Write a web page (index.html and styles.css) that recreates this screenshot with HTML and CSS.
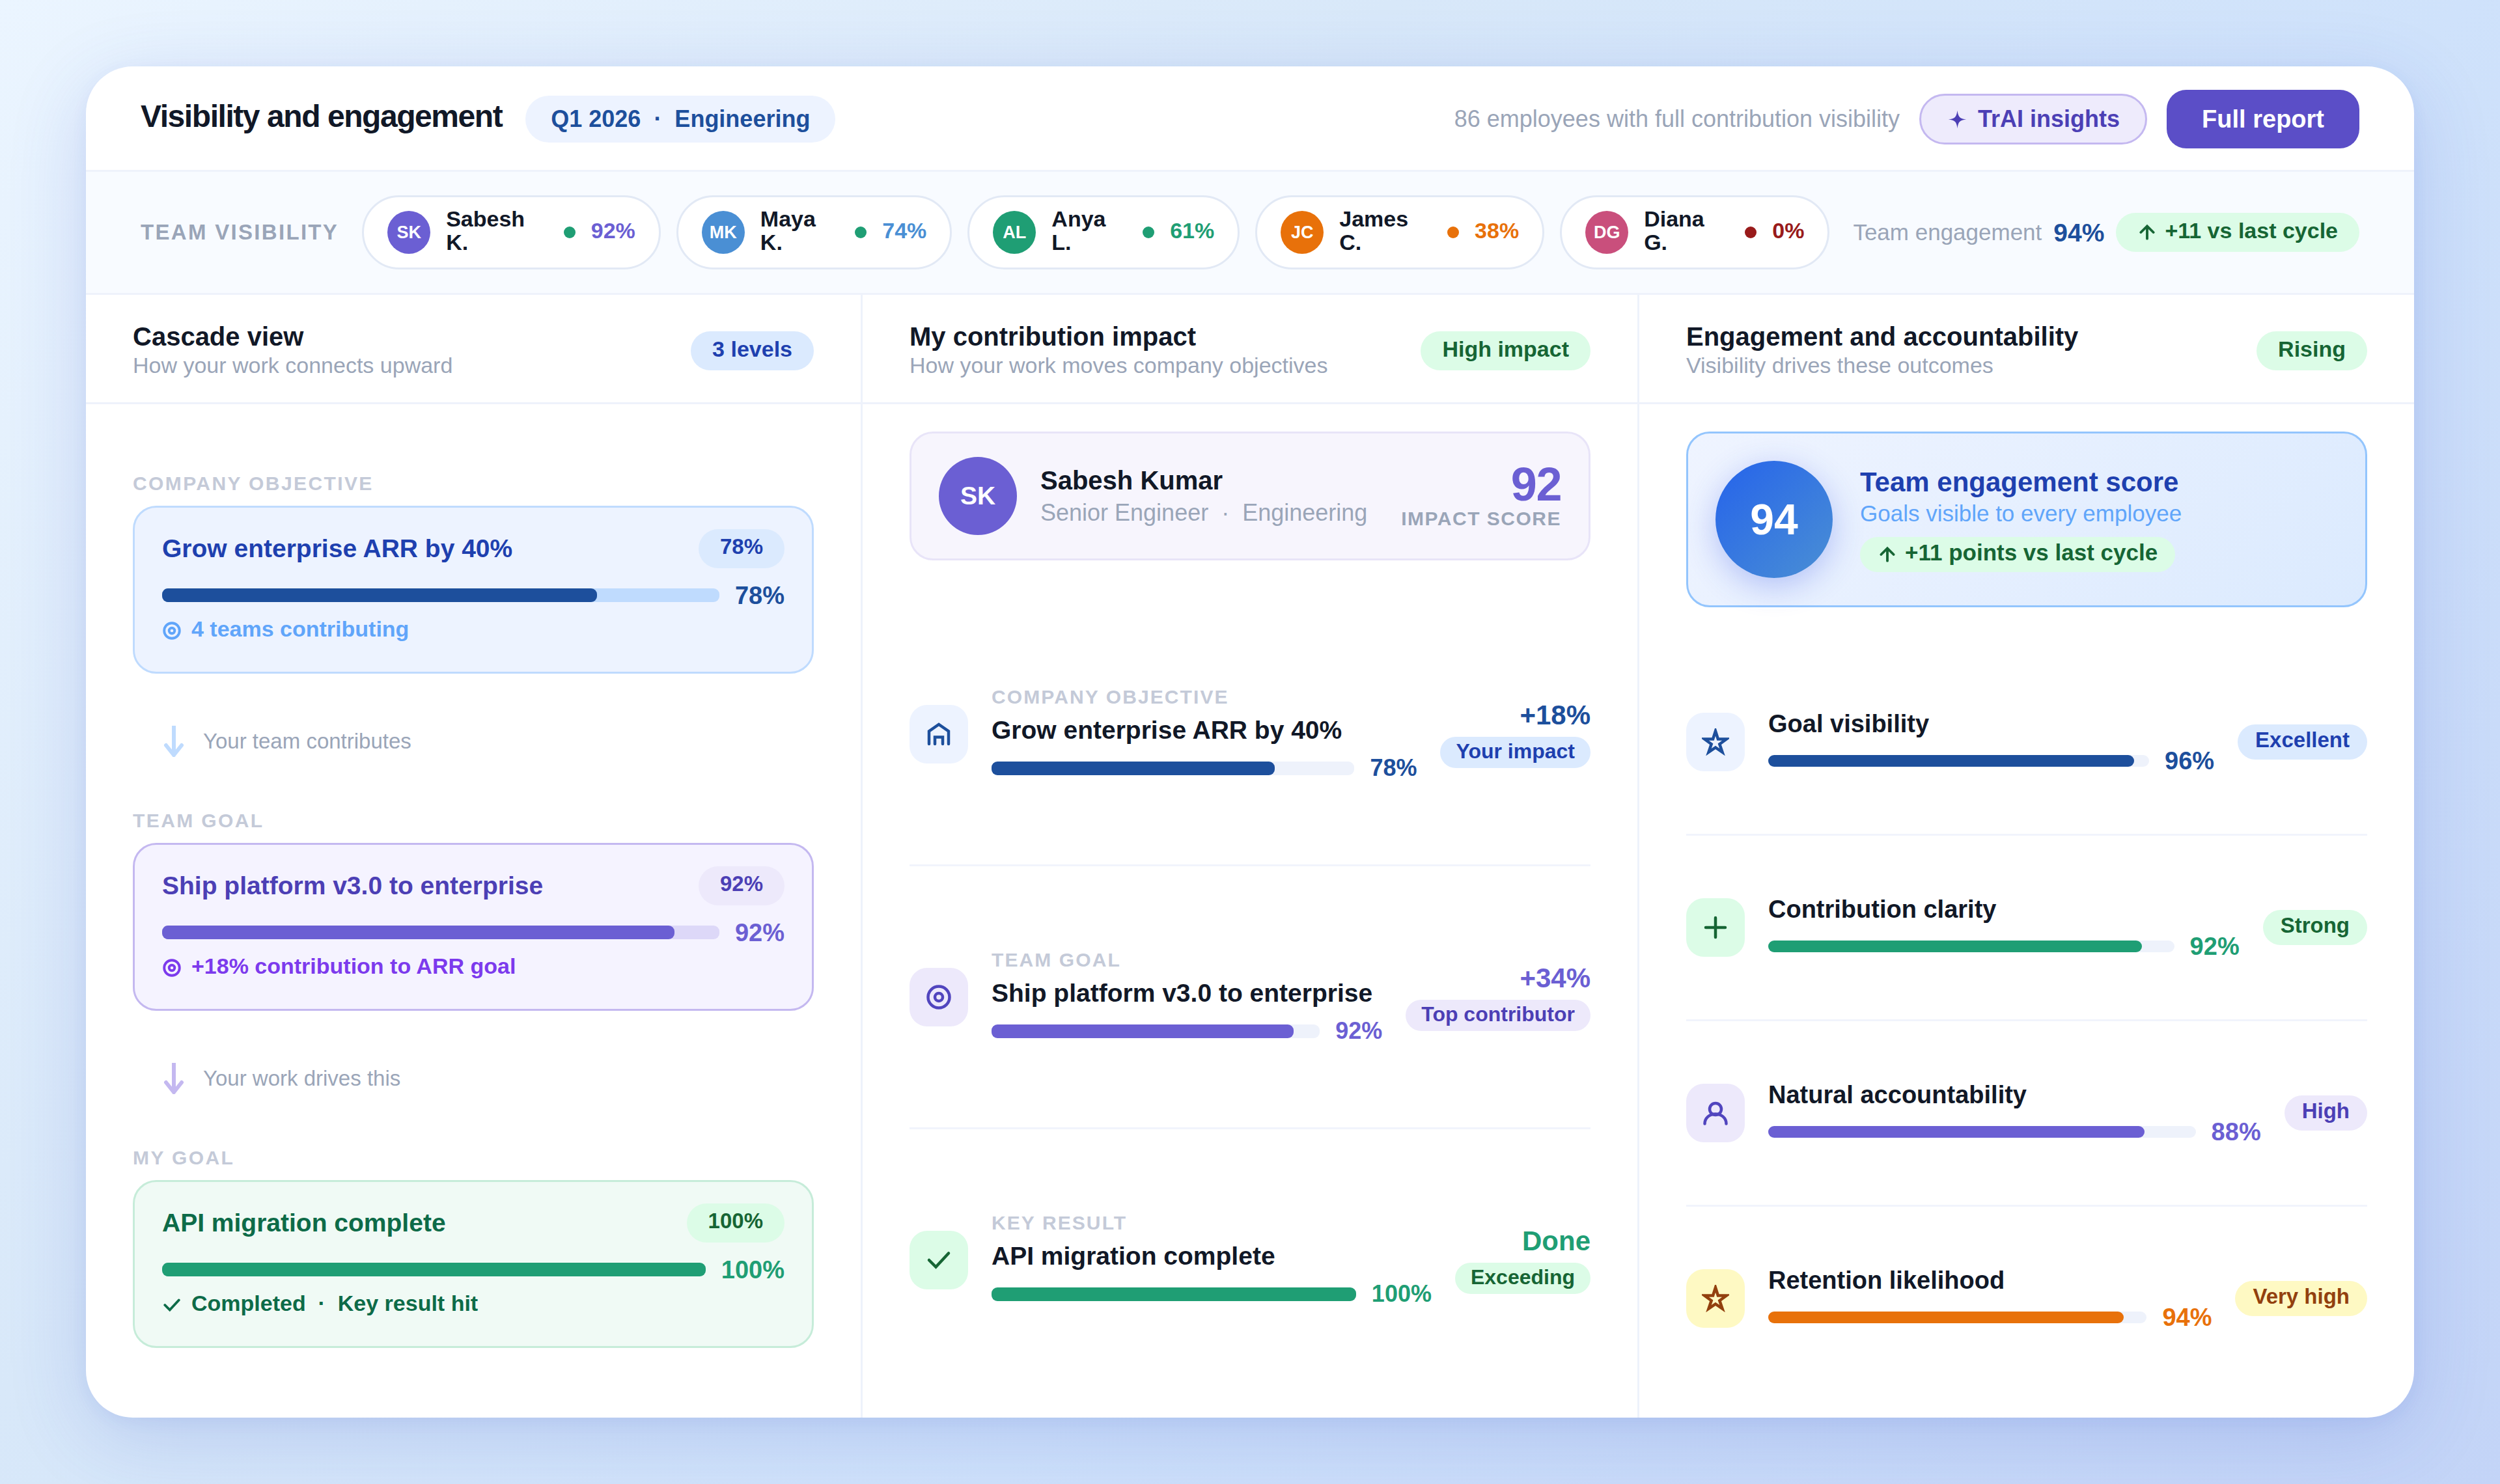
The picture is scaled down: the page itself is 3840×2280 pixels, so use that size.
FILE: index.html
```html
<!DOCTYPE html>
<html lang="en">
<head>
	<meta charset="utf-8">
	<title>Visibility and engagement</title>
	<link rel="stylesheet" href="styles.css">
</head>
<body>
	<!-- shared icons -->
	<svg class="sprite" aria-hidden="true">
		<symbol id="target" viewBox="0 0 14 14"><circle cx="7" cy="7" r="5.5"/><circle cx="7" cy="7" r="2"/></symbol>
		<symbol id="check" viewBox="0 0 14 14"><path d="M2 7l3.5 3.5 6.5-7"/></symbol>
		<symbol id="up" viewBox="0 0 14 14"><path d="M7 11.5V3M2.5 7L7 2.5 11.5 7"/></symbol>
		<symbol id="star" viewBox="0 0 14 14"><path d="M7 1.4l1.3 4.1h4.3L9.1 8.1l1.4 4.1L7 9.8l-3.5 2.4 1.4-4.1L1.4 5.5h4.3z"/></symbol>
		<symbol id="house" viewBox="0 0 14 14"><path d="M2 12V5.5L7 2l5 3.5V12M5 12V8.5h4V12"/></symbol>
		<symbol id="plus" viewBox="0 0 14 14"><path d="M7 2v10M2 7h10"/></symbol>
		<symbol id="person" viewBox="0 0 14 14"><circle cx="7" cy="5" r="3"/><path d="M1.5 12.5c0-3 2.5-5 5.5-5s5.5 2 5.5 5"/></symbol>
		<symbol id="down" viewBox="0 0 12 16"><path d="M6 0v15M2 10l4 5 4-5"/></symbol>
	</svg>

	<main class="board">
		<header class="topbar">
			<div class="topbar-title">
				<h1>Visibility and engagement</h1>
				<span class="period">Q1 2026 &nbsp;·&nbsp; Engineering</span>
			</div>
			<div class="topbar-actions">
				<span class="note">86 employees with full contribution visibility</span>
				<button type="button" class="btn-insights">
					<svg viewBox="0 0 14 14"><path d="M7 1.2Q7.4 4.4 8.5 5.5 9.6 6.6 12.8 7 9.6 7.4 8.5 8.5 7.4 9.6 7 12.8 6.6 9.6 5.5 8.5 4.4 7.4 1.2 7 4.4 6.6 5.5 5.5 6.6 4.4 7 1.2z"/></svg>
					TrAI insights
				</button>
				<button type="button" class="btn-report">Full report</button>
			</div>
		</header>

		<section class="teambar">
			<span class="teambar-label">TEAM VISIBILITY</span>
			<div class="chips">
				<div class="chip"><span class="avatar violet">SK</span><span class="chip-text">Sabesh K.</span><span class="dot on"></span><span class="chip-text t-violet">92%</span></div>
				<div class="chip"><span class="avatar sky">MK</span><span class="chip-text">Maya K.</span><span class="dot on"></span><span class="chip-text t-sky">74%</span></div>
				<div class="chip"><span class="avatar green">AL</span><span class="chip-text">Anya L.</span><span class="dot on"></span><span class="chip-text t-green">61%</span></div>
				<div class="chip"><span class="avatar orange">JC</span><span class="chip-text">James C.</span><span class="dot warn"></span><span class="chip-text t-orange">38%</span></div>
				<div class="chip"><span class="avatar pink">DG</span><span class="chip-text">Diana G.</span><span class="dot off"></span><span class="chip-text t-red">0%</span></div>
			</div>
			<div class="team-score">
				<span>Team engagement</span>
				<strong>94%</strong>
				<span class="pill pill-lg pill-green"><svg class="icon"><use href="#up"/></svg><span>+11 vs last cycle</span></span>
			</div>
		</section>

		<div class="columns">
			<section class="column">
				<div class="column-head">
					<div>
						<h2>Cascade view</h2>
						<p>How your work connects upward</p>
					</div>
					<span class="pill pill-lg pill-blue">3 levels</span>
				</div>
				<div class="column-body cascade">
					<div class="level">
						<div class="kicker">COMPANY OBJECTIVE</div>
						<div class="goal goal-blue">
							<div class="goal-top"><h3>Grow enterprise ARR by 40%</h3><span class="pill pill-pct pill-blue">78%</span></div>
							<div class="progress"><div class="track"><div class="fill" style="width: 78%"></div></div><b>78%</b></div>
							<div class="goal-foot"><svg class="icon"><use href="#target"/></svg>4 teams contributing</div>
						</div>
					</div>
					<div class="connector link-blue"><svg><use href="#down"/></svg>Your team contributes</div>
					<div class="level">
						<div class="kicker">TEAM GOAL</div>
						<div class="goal goal-violet">
							<div class="goal-top"><h3>Ship platform v3.0 to enterprise</h3><span class="pill pill-pct pill-violet">92%</span></div>
							<div class="progress"><div class="track"><div class="fill" style="width: 92%"></div></div><b>92%</b></div>
							<div class="goal-foot"><svg class="icon"><use href="#target"/></svg>+18% contribution to ARR goal</div>
						</div>
					</div>
					<div class="connector link-violet"><svg><use href="#down"/></svg>Your work drives this</div>
					<div class="level">
						<div class="kicker">MY GOAL</div>
						<div class="goal goal-green">
							<div class="goal-top"><h3>API migration complete</h3><span class="pill pill-pct pill-green">100%</span></div>
							<div class="progress"><div class="track"><div class="fill" style="width: 100%"></div></div><b>100%</b></div>
							<div class="goal-foot"><svg class="icon"><use href="#check"/></svg>Completed &nbsp;·&nbsp; Key result hit</div>
						</div>
					</div>
				</div>
			</section>

			<section class="column">
				<div class="column-head">
					<div>
						<h2>My contribution impact</h2>
						<p>How your work moves company objectives</p>
					</div>
					<span class="pill pill-lg pill-green">High impact</span>
				</div>
				<div class="column-body">
					<div class="profile">
						<span class="avatar avatar-lg violet">SK</span>
						<div class="profile-info">
							<h3>Sabesh Kumar</h3>
							<p>Senior Engineer &nbsp;·&nbsp; Engineering</p>
						</div>
						<div class="profile-score">
							<strong>92</strong>
							<span>IMPACT SCORE</span>
						</div>
					</div>
					<div class="row impact c-blue">
						<div class="tile tile-blue"><svg><use href="#house"/></svg></div>
						<div class="row-main">
							<div class="kicker">COMPANY OBJECTIVE</div>
							<h3>Grow enterprise ARR by 40%</h3>
							<div class="progress"><div class="track"><div class="fill" style="width: 78%"></div></div><b>78%</b></div>
						</div>
						<div class="row-side"><strong>+18%</strong><span class="pill pill-sm pill-blue">Your impact</span></div>
					</div>
					<div class="row impact c-violet">
						<div class="tile tile-violet"><svg><use href="#target"/></svg></div>
						<div class="row-main">
							<div class="kicker">TEAM GOAL</div>
							<h3>Ship platform v3.0 to enterprise</h3>
							<div class="progress"><div class="track"><div class="fill" style="width: 92%"></div></div><b>92%</b></div>
						</div>
						<div class="row-side"><strong>+34%</strong><span class="pill pill-sm pill-violet">Top contributor</span></div>
					</div>
					<div class="row impact c-green">
						<div class="tile tile-green"><svg><use href="#check"/></svg></div>
						<div class="row-main">
							<div class="kicker">KEY RESULT</div>
							<h3>API migration complete</h3>
							<div class="progress"><div class="track"><div class="fill" style="width: 100%"></div></div><b>100%</b></div>
						</div>
						<div class="row-side"><strong>Done</strong><span class="pill pill-sm pill-green">Exceeding</span></div>
					</div>
				</div>
			</section>

			<section class="column">
				<div class="column-head">
					<div>
						<h2>Engagement and accountability</h2>
						<p>Visibility drives these outcomes</p>
					</div>
					<span class="pill pill-lg pill-green">Rising</span>
				</div>
				<div class="column-body">
					<div class="hero">
						<div class="ring">94</div>
						<div class="hero-info">
							<h3>Team engagement score</h3>
							<p>Goals visible to every employee</p>
							<span class="pill pill-green"><svg class="icon"><use href="#up"/></svg><span>+11 points vs last cycle</span></span>
						</div>
					</div>
					<div class="row outcome c-blue">
						<div class="tile tile-blue"><svg><use href="#star"/></svg></div>
						<div class="row-main">
							<h3>Goal visibility</h3>
							<div class="progress"><div class="track"><div class="fill" style="width: 96%"></div></div><b>96%</b></div>
						</div>
						<span class="pill pill-blue">Excellent</span>
					</div>
					<div class="row outcome c-green">
						<div class="tile tile-green"><svg><use href="#plus"/></svg></div>
						<div class="row-main">
							<h3>Contribution clarity</h3>
							<div class="progress"><div class="track"><div class="fill" style="width: 92%"></div></div><b>92%</b></div>
						</div>
						<span class="pill pill-green">Strong</span>
					</div>
					<div class="row outcome c-violet">
						<div class="tile tile-violet"><svg><use href="#person"/></svg></div>
						<div class="row-main">
							<h3>Natural accountability</h3>
							<div class="progress"><div class="track"><div class="fill" style="width: 88%"></div></div><b>88%</b></div>
						</div>
						<span class="pill pill-violet">High</span>
					</div>
					<div class="row outcome c-orange">
						<div class="tile tile-yellow"><svg><use href="#star"/></svg></div>
						<div class="row-main">
							<h3>Retention likelihood</h3>
							<div class="progress"><div class="track"><div class="fill" style="width: 94%"></div></div><b>94%</b></div>
						</div>
						<span class="pill pill-yellow">Very high</span>
					</div>
				</div>
			</section>
		</div>
	</main>
</body>
</html>
```

FILE: styles.css
```css
* {
	box-sizing: border-box;
	margin: 0;
	padding: 0;
}
body {
	min-height: 100vh;
	display: flex;
	padding: 102px 132px;
	font-family: "Liberation Sans", Arial, sans-serif;
	font-size: 34px;
	line-height: 36px;
	color: #111827;
	background: linear-gradient(135deg, #ebf5ff 0%, #d8e8f9 35%, #cfe2fb 62%, #c3d4f7 100%);
}
button {
	font-family: inherit;
	font-weight: bold;
	cursor: pointer;
}
svg {
	flex: none;
	fill: none;
	stroke: currentColor;
	stroke-width: 1.5;
	stroke-linecap: round;
}
.sprite {
	display: none;
}
.icon {
	width: 30px;
	height: 30px;
	stroke-width: 1.8;
}

/* card */
.board {
	flex: 1;
	min-width: 0;
	display: flex;
	flex-direction: column;
	background: #fff;
	border-radius: 72px;
	overflow: hidden;
	box-shadow: 0 30px 120px rgba(50, 80, 200, 0.18), 0 6px 24px rgba(50, 80, 200, 0.06);
}

/* top bar */
.topbar {
	display: flex;
	align-items: center;
	justify-content: space-between;
	padding: 36px 84px 33px;
	border-bottom: 3px solid #eef2fb;
}
.topbar-title {
	display: flex;
	align-items: baseline;
	gap: 36px;
	white-space: nowrap;
}
h1 {
	font-size: 48px;
	line-height: 51px;
	letter-spacing: -0.03em;
}
.period {
	padding: 15px 39px;
	border-radius: 36px;
	font-size: 36px;
	line-height: 42px;
	font-weight: bold;
	color: #1d4f9c;
	background: #edf3ff;
}
.topbar-actions {
	display: flex;
	align-items: center;
	gap: 30px;
	white-space: nowrap;
}
.note {
	font-size: 36px;
	line-height: 42px;
	color: #9aa5b8;
}
.btn-insights {
	display: flex;
	align-items: center;
	gap: 15px;
	padding: 15px 39px;
	border: 3px solid #c4b8f0;
	border-radius: 39px;
	font-size: 36px;
	line-height: 42px;
	color: #4c3fb5;
	background: #eeebfc;
}
.btn-insights svg {
	width: 33px;
	height: 33px;
	fill: currentColor;
	stroke: none;
}
.btn-report {
	padding: 24px 54px;
	border: 0;
	border-radius: 30px;
	font-size: 38px;
	line-height: 42px;
	color: #fff;
	background: #5b4ec7;
}

/* team bar */
.teambar {
	display: flex;
	align-items: center;
	gap: 36px;
	padding: 36px 84px;
	background: #f8fbff;
	border-bottom: 3px solid #eef2fb;
}
.teambar-label {
	flex: none;
	font-size: 33px;
	font-weight: bold;
	letter-spacing: 0.07em;
	color: #9aa5b8;
}
.chips {
	flex: 1;
	min-width: 0;
	display: flex;
	gap: 24px;
}
.chip {
	display: flex;
	align-items: center;
	gap: 24px;
	padding: 15px 36px;
	border: 3px solid #e2e9f5;
	border-radius: 57px;
	font-weight: bold;
	background: #fff;
}
.chip-text {
	padding-bottom: 6px;
}
.avatar {
	flex: none;
	display: flex;
	align-items: center;
	justify-content: center;
	width: 66px;
	height: 66px;
	border-radius: 50%;
	font-size: 27px;
	font-weight: bold;
	color: #fff;
}
.avatar-lg {
	width: 120px;
	height: 120px;
	font-size: 39px;
}
.dot {
	flex: none;
	width: 18px;
	height: 18px;
	border-radius: 50%;
}
.on { background: #1f9e74; }
.warn { background: #e8710a; }
.off { background: #991b1b; }
.violet { background: #6b5fd3; }
.sky { background: #4a8fd4; }
.green { background: #1f9e74; }
.orange { background: #e8710a; }
.pink { background: #c94f7c; }
.t-violet { color: #6b5fd3; }
.t-sky { color: #4a8fd4; }
.t-green { color: #1f9e74; }
.t-orange { color: #e8710a; }
.t-red { color: #991b1b; }
.team-score {
	flex: none;
	display: flex;
	align-items: center;
	gap: 18px;
	font-size: 35px;
	color: #9aa5b8;
	white-space: nowrap;
}
.team-score strong {
	font-size: 39px;
	line-height: 45px;
	color: #1d4f9c;
}

/* pills */
.pill {
	flex: none;
	display: inline-flex;
	gap: 12px;
	padding: 6px 27px 12px;
	border-radius: 30px;
	font-size: 33px;
	font-weight: bold;
	white-space: nowrap;
}
.pill .icon {
	margin-top: 6px;
}
.pill-lg {
	padding: 9px 33px 15px;
	font-size: 34px;
}
.pill-pct {
	padding: 9px 33px 15px;
}
.pill-sm {
	padding: 4px 24px 8px;
	font-size: 32px;
}
.pill-blue { color: #1e40af; background: #dbeafe; }
.pill-violet { color: #4c3fb5; background: #ede9fb; }
.pill-green { color: #166534; background: #dcfce7; }
.pill-yellow { color: #92400e; background: #fef9c3; }

/* columns */
.columns {
	flex: 1;
	display: flex;
}
.column {
	flex: 1;
	min-width: 0;
	display: flex;
	flex-direction: column;
}
.column + .column {
	border-left: 3px solid #eef2fb;
}
.column-head {
	display: flex;
	align-items: center;
	justify-content: space-between;
	padding: 42px 72px 36px;
	border-bottom: 3px solid #eef2fb;
}
h2 {
	font-size: 40px;
	line-height: 45px;
}
.column-head p {
	line-height: 42px;
	color: #9aa5b8;
}
.column-body {
	flex: 1;
	display: flex;
	flex-direction: column;
	padding: 42px 72px;
}
.kicker {
	font-size: 30px;
	line-height: 33px;
	font-weight: bold;
	letter-spacing: 0.08em;
	color: #c4cad8;
}

/* progress */
.progress {
	display: flex;
	align-items: center;
	gap: 24px;
	font-size: 38px;
	line-height: 42px;
}
.track {
	flex: 1;
	height: 21px;
	border-radius: 9px;
	background: #eef2fb;
}
.fill {
	height: 100%;
	border-radius: 9px;
}
.outcome .track {
	height: 18px;
}
.impact .progress {
	font-size: 36px;
}

/* cascade */
.cascade {
	justify-content: space-evenly;
	padding-top: 39px;
}
.level .kicker {
	margin-bottom: 18px;
}
.goal {
	padding: 33px 42px 48px;
	border: 3px solid;
	border-radius: 36px;
}
.goal-top {
	display: flex;
	align-items: center;
	justify-content: space-between;
	margin-bottom: 21px;
}
.goal h3 {
	font-size: 39px;
	line-height: 45px;
}
.goal-foot {
	display: flex;
	gap: 15px;
	margin-top: 12px;
	font-weight: bold;
}
.goal-foot .icon {
	margin-top: 6px;
}
.goal-blue { background: #edf3ff; border-color: #bfdbfe; }
.goal-blue h3 { color: #1e40af; }
.goal-blue .track { background: #bfdbfe; }
.goal-blue .fill { background: #1d4f9c; }
.goal-blue b { color: #1d4f9c; }
.goal-blue .goal-foot { color: #60a5fa; }
.goal-violet { background: #f5f3ff; border-color: #c4b8f0; }
.goal-violet h3 { color: #4c3fb5; }
.goal-violet .track { background: #ddd8f8; }
.goal-violet .fill { background: #6b5fd3; }
.goal-violet b { color: #6b5fd3; }
.goal-violet .goal-foot { color: #7c3aed; }
.goal-green { background: #f0faf5; border-color: #c6ecd9; }
.goal-green h3 { color: #0d6b48; }
.goal-green .fill { background: #1f9e74; }
.goal-green b { color: #1f9e74; }
.goal-green .goal-foot { color: #0d6b48; }
.connector {
	display: flex;
	align-items: center;
	gap: 27px;
	padding: 15px 45px;
	font-size: 33px;
	color: #9aa5b8;
}
.connector svg {
	width: 36px;
	height: 48px;
	stroke-width: 2;
}
.link-blue svg { color: #bfdbfe; }
.link-violet svg { color: #c4b8f0; }

/* profile */
.profile {
	display: flex;
	align-items: center;
	gap: 36px;
	margin-bottom: 66px;
	padding: 36px 42px;
	border: 3px solid #e8e4f8;
	border-radius: 36px;
	background: #f7f5fd;
}
.profile-info {
	flex: 1;
}
.profile-info h3 {
	margin-bottom: 6px;
	font-size: 40px;
	line-height: 45px;
}
.profile-info p {
	font-size: 36px;
	line-height: 42px;
	color: #9aa5b8;
	white-space: nowrap;
}
.profile-score {
	padding-bottom: 3px;
	text-align: right;
	white-space: nowrap;
}
.profile-score strong {
	display: block;
	font-size: 72px;
	line-height: 72px;
	letter-spacing: -0.02em;
	color: #6b5fd3;
}
.profile-score span {
	display: block;
	font-size: 30px;
	line-height: 33px;
	font-weight: bold;
	letter-spacing: 0.05em;
	color: #9aa5b8;
}

/* engagement score */
.hero {
	display: flex;
	align-items: center;
	gap: 42px;
	margin-bottom: 66px;
	padding: 42px;
	border: 3px solid #93c5fd;
	border-radius: 36px;
	background: linear-gradient(135deg, #eff4ff, #dbeafe);
}
.ring {
	flex: none;
	display: flex;
	align-items: center;
	justify-content: center;
	width: 180px;
	height: 180px;
	border-radius: 50%;
	font-size: 66px;
	font-weight: bold;
	color: #fff;
	background: linear-gradient(135deg, #2563eb, #4a8fd4);
	box-shadow: 0 12px 48px rgba(50, 80, 230, 0.3);
}
.hero h3 {
	margin-bottom: 6px;
	font-size: 42px;
	line-height: 48px;
	color: #1e40af;
}
.hero p {
	margin-bottom: 18px;
	font-size: 35px;
	color: #60a5fa;
}
.hero .pill {
	display: flex;
	width: fit-content;
	font-size: 35px;
}

/* rows */
.row {
	flex: 1 1 0;
	display: flex;
	align-items: center;
	gap: 36px;
}
.row + .row {
	border-top: 3px solid #f1f4fc;
}
.tile {
	flex: none;
	display: flex;
	align-items: center;
	justify-content: center;
	width: 90px;
	height: 90px;
	border-radius: 27px;
}
.tile svg {
	width: 42px;
	height: 42px;
}
.tile-blue { color: #1d4f9c; background: #edf3ff; }
.tile-violet { color: #5145be; background: #ede9fb; }
.tile-green { color: #166534; background: #dcfce7; }
.tile-yellow { color: #92400e; background: #fef9c3; }
.row-main {
	flex: 1;
	min-width: 0;
}
.impact .kicker {
	margin-bottom: 12px;
	letter-spacing: 0.07em;
}
.row h3 {
	margin-bottom: 15px;
	font-size: 39px;
	line-height: 45px;
}
.outcome h3 {
	font-size: 38px;
	line-height: 42px;
}
.row-side {
	display: flex;
	flex-direction: column;
	align-items: flex-end;
	gap: 9px;
}
.row-side strong {
	font-size: 42px;
	line-height: 48px;
}
.c-blue .fill { background: #1d4f9c; }
.c-blue b, .c-blue strong { color: #1d4f9c; }
.c-violet .fill { background: #6b5fd3; }
.c-violet b, .c-violet strong { color: #6b5fd3; }
.c-green .fill { background: #1f9e74; }
.c-green b, .c-green strong { color: #1f9e74; }
.c-orange .fill { background: #e8710a; }
.c-orange b, .c-orange strong { color: #e8710a; }
```
